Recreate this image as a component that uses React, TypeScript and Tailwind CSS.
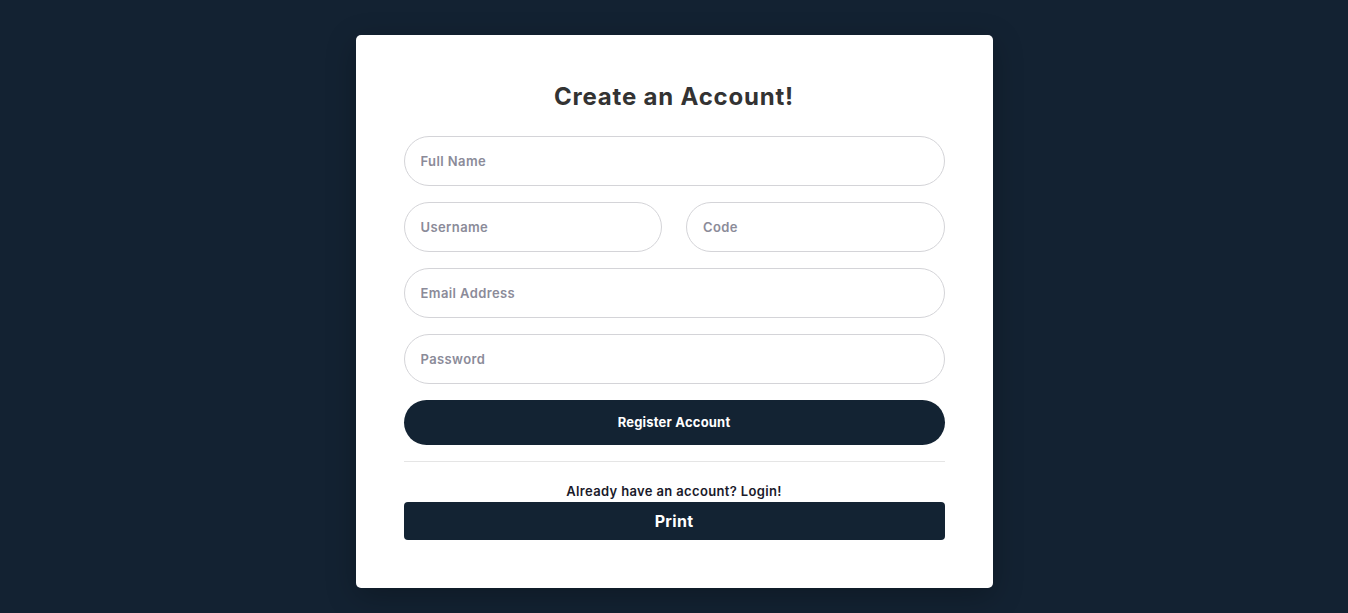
import React from "react";

const font = { fontFamily: "Inter, 'Noto Sans', sans-serif" };

function Field({ placeholder, className = "" }: { placeholder: string; className?: string }) {
  return (
    <input
      placeholder={placeholder}
      className={`h-[50px] w-full rounded-full border border-[#d4d4d8] bg-white px-4 text-[13px] font-semibold tracking-[0.4px] text-[#333] outline-none placeholder:text-[#8b8b99] ${className}`}
    />
  );
}

export default function App() {
  return (
    <div className="min-h-[613px] w-full bg-[#132232] pt-[35px]" style={font}>
      <div className="mx-auto w-[637px] rounded-[5px] bg-white px-12 pb-12 pt-12 shadow-[0_8px_30px_rgba(0,0,0,0.25)]">
        <h1 className="mb-[25px] text-center text-[24px] font-bold leading-[28px] tracking-[0.8px] text-[#333]">Create an Account!</h1>
        <form className="flex flex-col gap-4" onSubmit={(e) => e.preventDefault()}>
          <Field placeholder="Full Name" />
          <div className="grid grid-cols-2 gap-6">
            <Field placeholder="Username" />
            <Field placeholder="Code" />
          </div>
          <Field placeholder="Email Address" />
          <Field placeholder="Password" />
          <button type="submit" className="h-[45px] w-full rounded-full bg-[#132333] text-[13px] font-bold tracking-[0.2px] text-white">
            Register Account
          </button>
        </form>
        <hr className="mt-4 border-t border-[#e5e5e5]" />
        <p className="mt-[21px] text-center text-[13px] font-semibold leading-[16px] tracking-[0.35px] text-[#1a1a2a]">
          Already have an account? Login!
        </p>
        <button className="mt-[3px] h-[38px] w-full rounded-[4px] bg-[#132333] text-[16px] font-bold tracking-[0.3px] text-white">Print</button>
      </div>
    </div>
  );
}
